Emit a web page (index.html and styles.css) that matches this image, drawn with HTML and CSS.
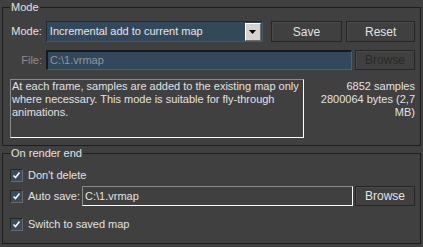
FILE: index.html
```html
<!DOCTYPE html>
<html lang="en">
<head>
  <meta charset="UTF-8">
  <title>Light cache mode</title>
  <link rel="stylesheet" href="styles.css">
</head>
<body>
  <fieldset class="group group-mode">
    <legend>Mode</legend>
    <div class="row row-mode">
      <span class="lbl">Mode:</span>
      <div class="combo">
        <span class="combo-text">Incremental add to current map</span>
        <span class="combo-btn">
          <svg width="7" height="4" viewBox="0 0 7 4"><path d="M0 0H7L3.5 4Z" fill="#000"/></svg>
        </span>
      </div>
      <button class="btn btn-save">Save</button>
      <button class="btn btn-reset">Reset</button>
    </div>
    <div class="row row-file">
      <span class="lbl disabled">File:</span>
      <div class="field field-file">C:\1.vrmap</div>
      <button class="btn btn-browse" disabled>Browse</button>
    </div>
    <div class="row row-info">
      <div class="desc">At each frame, samples are added to the existing map only where necessary. This mode is suitable for fly-through animations.</div>
      <div class="stats">6852 samples<br>2800064 bytes (2,7<br>MB)</div>
    </div>
  </fieldset>

  <fieldset class="group group-end">
    <legend>On render end</legend>
    <div class="check-row">
      <span class="check"><svg width="9" height="9" viewBox="0 0 9 9"><path d="M1.5 4.5L3.5 6.5L7.5 1.5" stroke="#f4f4f4" stroke-width="1.6" fill="none"/></svg></span>
      <span>Don't delete</span>
    </div>
    <div class="check-row row-autosave">
      <span class="check"><svg width="9" height="9" viewBox="0 0 9 9"><path d="M1.5 4.5L3.5 6.5L7.5 1.5" stroke="#f4f4f4" stroke-width="1.6" fill="none"/></svg></span>
      <span class="save-lbl">Auto save:</span>
      <div class="field field-save">C:\1.vrmap</div>
      <button class="btn btn-browse2">Browse</button>
    </div>
    <div class="check-row row-switch">
      <span class="check"><svg width="9" height="9" viewBox="0 0 9 9"><path d="M1.5 4.5L3.5 6.5L7.5 1.5" stroke="#f4f4f4" stroke-width="1.6" fill="none"/></svg></span>
      <span>Switch to saved map</span>
    </div>
  </fieldset>
</body>
</html>
```

FILE: styles.css
```css
body {
  margin: 0;
  padding: 1px 2px 0 2px;
  background-color: #404040;
  color: #e2e2e2;
  font-family: 'Liberation Sans', Arial, sans-serif;
  font-size: 11px;
  line-height: 13px;
}
.group {
  margin: 0;
  border: 1px solid #1e1e1e;
  padding: 7px 5px 7px 7px;
  min-width: 0;
}
.group legend {
  padding: 0 1px;
  line-height: 13px;
}
.group-end {
  margin-top: 1px;
  padding: 9px 5px 12px 7px;
}
.row {
  display: flex;
  align-items: center;
}
.row-mode {
  height: 21px;
}
.row-file {
  height: 20px;
  margin-top: 8px;
}
.row-info {
  align-items: flex-start;
  margin-top: 9px;
}
.lbl {
  width: 32px;
  margin-right: 4px;
  text-align: right;
}
.lbl.disabled {
  color: #8e8e8e;
}
.combo {
  width: 218px;
  height: 21px;
  box-sizing: border-box;
  display: flex;
  align-items: center;
  background-color: #34485b;
  border: 1px solid #1f2a35;
  border-right-color: #44576a;
  border-bottom-color: #44576a;
  color: #e6e6e6;
}
.combo-text {
  flex: 1;
  padding-left: 3px;
}
.combo-btn {
  width: 16px;
  height: 18px;
  box-sizing: border-box;
  margin-right: 1px;
  display: flex;
  align-items: center;
  justify-content: center;
  background-color: #d6d3cc;
  border: 1px solid #fff;
  border-right-color: #6e6e6e;
  border-bottom-color: #6e6e6e;
}
.btn {
  height: 21px;
  box-sizing: border-box;
  padding: 0;
  background-color: #404040;
  border: 1px solid #262626;
  box-shadow: inset 1px 1px 0 #4a4a4a;
  color: #e2e2e2;
  font-family: inherit;
  font-size: 12px;
}
.btn-save {
  width: 72px;
  margin-left: 8px;
}
.btn-reset {
  width: 69px;
  margin-left: 4px;
}
.btn-browse {
  width: 60px;
  height: 20px;
  margin-left: 3px;
  color: #2a2a2a;
}
.field {
  height: 20px;
  box-sizing: border-box;
  padding-left: 2px;
  display: flex;
  align-items: center;
}
.field-file {
  width: 306px;
  background-color: #34485b;
  border: 2px solid #151a20;
  border-right: 1px solid #4e5f70;
  border-bottom: 1px solid #4e5f70;
  color: #8b95a0;
}
.desc {
  width: 294px;
  height: 59px;
  box-sizing: border-box;
  padding: 0 1px;
  border: 1px solid #8a8a8a;
  border-right-color: #fff;
  border-bottom-color: #fff;
}
.stats {
  flex: 1;
  padding-top: 1px;
  text-align: right;
}
.check-row {
  display: flex;
  align-items: center;
  height: 13px;
}
.row-autosave {
  height: 20px;
  margin-top: 4px;
}
.row-switch {
  margin-top: 12px;
}
.check {
  width: 13px;
  height: 13px;
  box-sizing: border-box;
  margin-right: 5px;
  display: flex;
  align-items: center;
  justify-content: center;
  background-color: #3a4b5c;
  border: 1px solid #262626;
  border-right-color: #6a6a6a;
  border-bottom-color: #6a6a6a;
}
.save-lbl {
  width: 54px;
}
.field-save {
  flex: 1;
  border: 1px solid #8a8a8a;
  border-right-color: #fff;
  border-bottom-color: #fff;
}
.btn-browse2 {
  width: 60px;
  height: 20px;
  margin-left: 2px;
}
```
